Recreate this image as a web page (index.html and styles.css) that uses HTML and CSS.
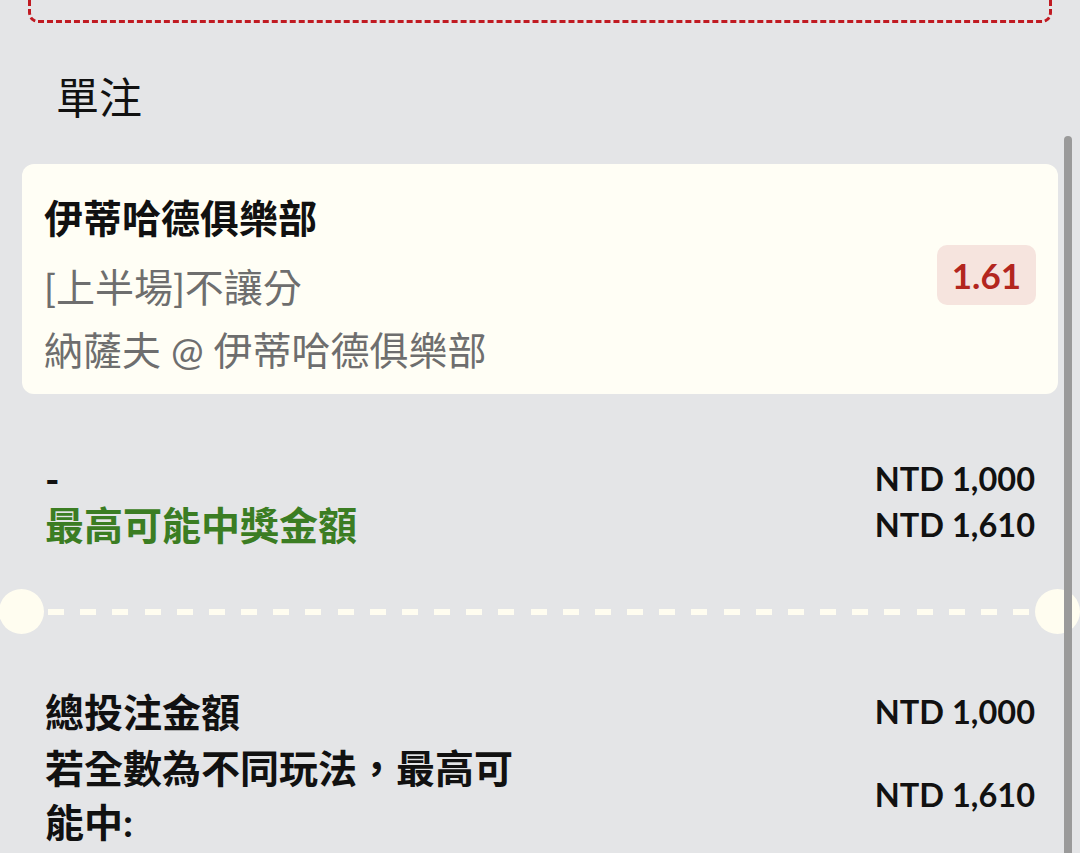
FILE: index.html
```html
<!DOCTYPE html>
<html lang="zh-Hant">
<head>
<meta charset="utf-8">
<title>單注</title>
<link rel="stylesheet" href="styles.css">
</head>
<body>
<div class="page">
  <div class="topbox"></div>
  <h2 class="section-title">單注</h2>
  <div class="bet-card">
    <div class="bet-info">
      <div class="bet-team">伊蒂哈德俱樂部</div>
      <div class="bet-market">[上半場]不讓分</div>
      <div class="bet-match">納薩夫 @ 伊蒂哈德俱樂部</div>
    </div>
    <div class="odds">1.61</div>
  </div>
  <div class="summary">
    <div class="row"><span class="label">-</span><span class="amount">NTD 1,000</span></div>
    <div class="row"><span class="label win">最高可能中獎金額</span><span class="amount">NTD 1,610</span></div>
  </div>
  <div class="divider"><div class="dashes"></div></div>
  <div class="totals">
    <div class="row"><span class="label">總投注金額</span><span class="amount">NTD 1,000</span></div>
    <div class="row wrap"><span class="label narrow">若全數為不同玩法，最高可能中:</span><span class="amount">NTD 1,610</span></div>
  </div>
</div>
<div class="scrollbar"></div>
</body>
</html>
```

FILE: styles.css
```css
html, body {
  margin: 0;
  padding: 0;
}
body {
  background: #e4e5e7;
  font-family: "Lato", "Noto Sans CJK TC", sans-serif;
  color: #111;
  width: 1080px;
  height: 853px;
  overflow: hidden;
}
.page {
  display: flex;
  flex-direction: column;
}
.topbox {
  height: 50px;
  margin: -30px 28px 0;
  border: 3px dashed #c01a22;
  border-top: none;
  border-radius: 0 0 10px 10px;
}
.section-title {
  margin: 50px 0 0;
  padding-left: 56px;
  font-size: 43px;
  font-weight: 400;
  line-height: 50px;
  color: #111;
}
.bet-card {
  margin: 41px 22px 0;
  height: 230px;
  box-sizing: border-box;
  padding: 23px 22px 0 22px;
  background: #fffef5;
  border-radius: 12px;
  display: flex;
  justify-content: space-between;
  align-items: flex-start;
}
.bet-info {
  font-size: 39px;
  line-height: 63px;
}
.bet-team {
  font-weight: 700;
  color: #111;
  margin-bottom: 6px;
}
.bet-market, .bet-match {
  color: #6e6e6e;
}
.odds {
  margin-top: 58px;
  height: 60px;
  line-height: 60px;
  padding: 0 15px;
  background: #f6e4de;
  color: #b3261e;
  font-weight: 700;
  font-size: 35px;
  border-radius: 10px;
}
.summary {
  margin-top: 62px;
  padding: 0 45px;
  font-size: 39px;
  line-height: 46px;
  font-weight: 700;
}
.row {
  display: flex;
  justify-content: space-between;
  align-items: center;
}
.amount {
  font-size: 32.5px;
  font-weight: 700;
  color: #111;
}
.label.win {
  color: #3b7d23;
}
.divider {
  margin-top: 41px;
  height: 45px;
  position: relative;
  display: flex;
  align-items: center;
}
.divider::before,
.divider::after {
  content: "";
  position: absolute;
  top: 0;
  width: 45px;
  height: 45px;
  border-radius: 50%;
  background: #fffdf0;
}
.divider::before { left: -1px; }
.divider::after { right: 0; }
.dashes {
  flex: 1;
  height: 6px;
  margin: 0 50px 0 48px;
  background: repeating-linear-gradient(to right, #fffdf0 0 16px, transparent 16px 32.17px);
}
.totals {
  margin-top: 51px;
  padding: 0 45px;
  font-size: 39px;
  line-height: 54px;
  font-weight: 700;
  display: flex;
  flex-direction: column;
  gap: 2px;
}
.label.narrow {
  max-width: 485px;
}
.scrollbar {
  position: fixed;
  top: 136px;
  bottom: 0;
  right: 8px;
  width: 8px;
  background: #9a9a9a;
  border-radius: 4px 4px 0 0;
}
```
